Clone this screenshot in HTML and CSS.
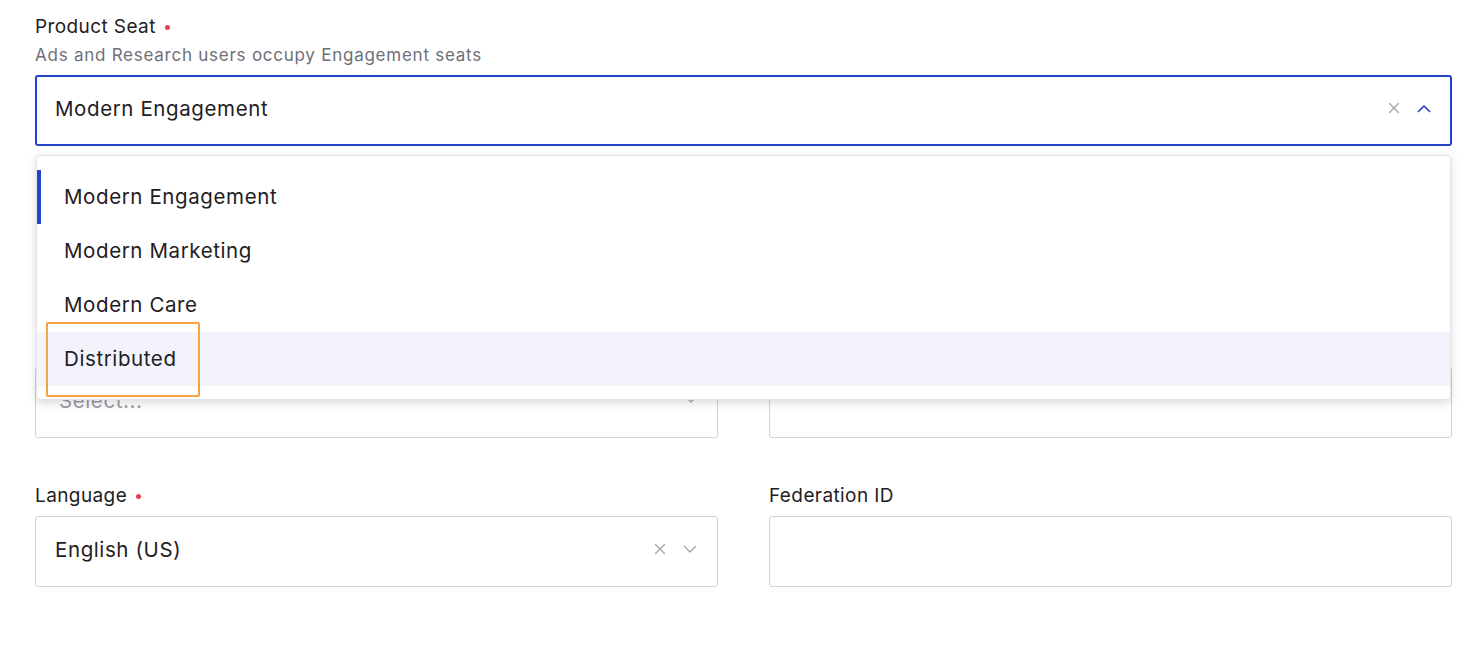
FILE: index.html
```html
<!DOCTYPE html>
<html lang="en">
<head>
    <meta charset="UTF-8">
    <meta name="viewport" content="width=device-width, initial-scale=1.0">
    <title>User Details</title>
    <link rel="stylesheet" href="styles.css">
</head>
<body>
    <form class="user-form">
        <!-- Product seat select, open -->
        <div class="field seat-field">
            <label class="label">Product Seat <span class="required"></span></label>
            <div class="helper">Ads and Research users occupy Engagement seats</div>
            <div class="select is-open">
                <span class="select-value">Modern Engagement</span>
                <span class="select-icons">
                    <svg class="icon-clear" width="12" height="12" viewBox="0 0 12 12"><path d="M1.5 1.5l9 9M10.5 1.5l-9 9" stroke="currentColor" stroke-width="1.4" fill="none" stroke-linecap="round"/></svg>
                    <svg class="icon-chevron up" width="14" height="9" viewBox="0 0 14 9"><path d="M1.5 7.5L7 2l5.5 5.5" stroke="currentColor" stroke-width="1.7" fill="none" stroke-linecap="round" stroke-linejoin="round"/></svg>
                </span>
            </div>

            <ul class="menu">
                <li class="option is-selected">Modern Engagement</li>
                <li class="option">Modern Marketing</li>
                <li class="option">Modern Care</li>
                <li class="option is-hover">Distributed</li>
                <div class="callout"></div>
            </ul>
        </div>

        <!-- this row sits under the open menu -->
        <div class="row covered">
            <div class="field">
                <div class="select">
                    <span class="select-value placeholder">Select...</span>
                    <span class="select-icons">
                        <svg class="icon-chevron" width="12" height="8" viewBox="0 0 12 8"><path d="M2 2l4 4 4-4" stroke="currentColor" stroke-width="1.3" fill="none" stroke-linecap="round" stroke-linejoin="round"/></svg>
                    </span>
                </div>
            </div>
            <div class="field">
                <div class="input"></div>
            </div>
        </div>

        <div class="row last">
            <div class="field">
                <label class="label">Language <span class="required"></span></label>
                <div class="select">
                    <span class="select-value">English (US)</span>
                    <span class="select-icons">
                        <svg class="icon-clear" width="12" height="12" viewBox="0 0 12 12"><path d="M1.5 1.5l9 9M10.5 1.5l-9 9" stroke="currentColor" stroke-width="1.3" fill="none" stroke-linecap="round"/></svg>
                        <svg class="icon-chevron" width="14" height="9" viewBox="0 0 14 9"><path d="M1.5 1.5L7 7l5.5-5.5" stroke="currentColor" stroke-width="1.3" fill="none" stroke-linecap="round" stroke-linejoin="round"/></svg>
                    </span>
                </div>
            </div>
            <div class="field">
                <label class="label">Federation ID</label>
                <div class="input"></div>
            </div>
        </div>
    </form>
</body>
</html>
```

FILE: styles.css
```css
/* Page */
body {
    margin: 0;
    background: #fff;
    font-family: 'Inter', 'Noto Sans', sans-serif;
    color: #1f2023;
}

.user-form {
    padding: 14px 24px 0 35px;
}

/* Labels */
.label {
    display: flex;
    align-items: center;
    gap: 9px;
    height: 24px;
    font-size: 19px;
    letter-spacing: 0.4px;
    color: #1f2023;
}

.required {
    width: 5px;
    height: 5px;
    border-radius: 50%;
    background: #e5404b;
    margin-top: 2px;
}

.helper {
    height: 24px;
    line-height: 24px;
    margin-top: 5px;
    font-size: 17px;
    color: #6d7078;
    letter-spacing: 0.75px;
}

/* Fields */
.field {
    position: relative;
}

.field .label + .select,
.field .label + .input {
    margin-top: 9px;
}

.field .helper + .select {
    margin-top: 8px;
}

.select,
.input {
    box-sizing: border-box;
    height: 71px;
    border: 1px solid #d2d3d8;
    border-radius: 3px;
    background: #fff;
    display: flex;
    align-items: center;
    padding: 0 20px 5px 19px;
}

.select.is-open {
    border: 2px solid #2343c8;
    padding-left: 18px;
    padding-right: 19px;
}

.select-value {
    flex: 1;
    font-size: 20.5px;
    letter-spacing: 0.6px;
    color: #1f2023;
}

.select-value.placeholder {
    color: #9a9ca3;
    padding-left: 4px;
}

.select-icons {
    display: flex;
    align-items: center;
    gap: 17px;
    color: #a4a6ac;
}

.icon-chevron.up {
    color: #2343c8;
}

/* Two column rows */
.row {
    display: grid;
    grid-template-columns: 1fr 1fr;
    gap: 51px;
}

.row.covered {
    margin-top: 221px;
}

.row.last {
    margin-top: 45px;
}

/* Dropdown menu */
.menu {
    position: absolute;
    top: 141px;
    left: 1px;
    right: 1px;
    z-index: 10;
    margin: 0;
    padding: 14px 0 13px;
    list-style: none;
    background: #fff;
    border: 1px solid #e2e3e7;
    border-radius: 4px;
    box-shadow: 0 3px 10px rgba(20, 22, 40, 0.16);
}

.option {
    height: 54px;
    line-height: 54px;
    padding-left: 23px;
    font-size: 20.5px;
    letter-spacing: 0.6px;
    color: #1f2023;
    border-left: 4px solid transparent;
}

.option.is-selected {
    border-left-color: #2343c8;
}

.option.is-hover {
    background: #f3f3fc;
}

/* Annotation box around the hovered option */
.callout {
    position: absolute;
    left: 9px;
    top: 166px;
    width: 150px;
    height: 71px;
    border: 2px solid #f7a23f;
    border-radius: 2px;
}
```
